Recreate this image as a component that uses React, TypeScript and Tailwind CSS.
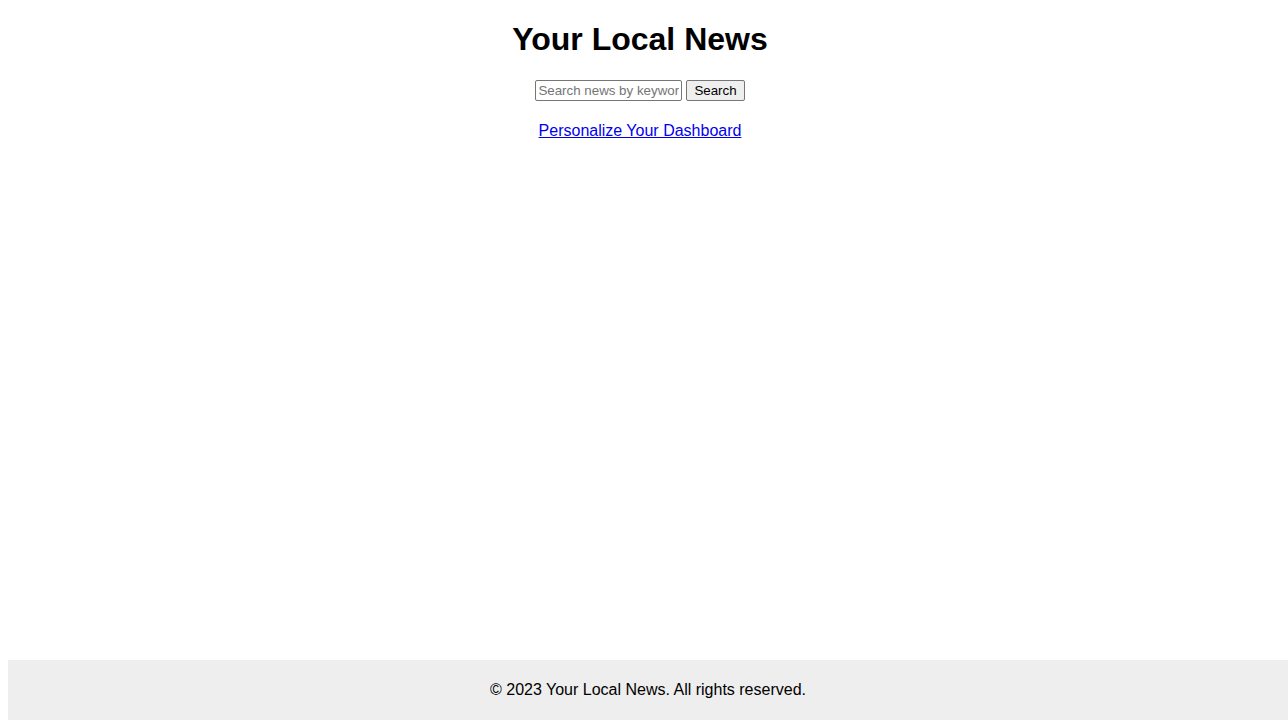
export default function App() {
  return (
    <div className="min-h-screen bg-white text-black font-['Liberation_Sans',Arial,sans-serif]">
      {/* Header */}
      <header className="text-center pt-[21px] pr-2">
        <h1 className="text-[32px] font-bold leading-[37px] mb-[22px]">Your Local News</h1>
        <form className="flex justify-center items-center gap-[4px]" onSubmit={(e) => e.preventDefault()}>
          <input
            type="text"
            placeholder="Search news by keyword"
            className="w-[147px] h-[21px] px-[2px] text-[13.33px] border border-[#767676] rounded-[2px] placeholder:text-[#757575] outline-none"
          />
          <button
            type="submit"
            className="h-[21px] px-[7px] text-[13.33px] leading-none bg-[#efefef] border border-[#767676] rounded-[2px]"
          >
            Search
          </button>
        </form>
        <nav className="mt-[18px]">
          <a href="#" className="text-[16px] leading-[18px] text-[#0000ee] underline">
            Personalize Your Dashboard
          </a>
        </nav>
      </header>

      {/* Footer */}
      <footer className="fixed bottom-0 left-2 right-0 h-[60px] bg-[#eeeeee] text-center text-[16px] leading-[60px]">
        © 2023 Your Local News. All rights reserved.
      </footer>
    </div>
  );
}
